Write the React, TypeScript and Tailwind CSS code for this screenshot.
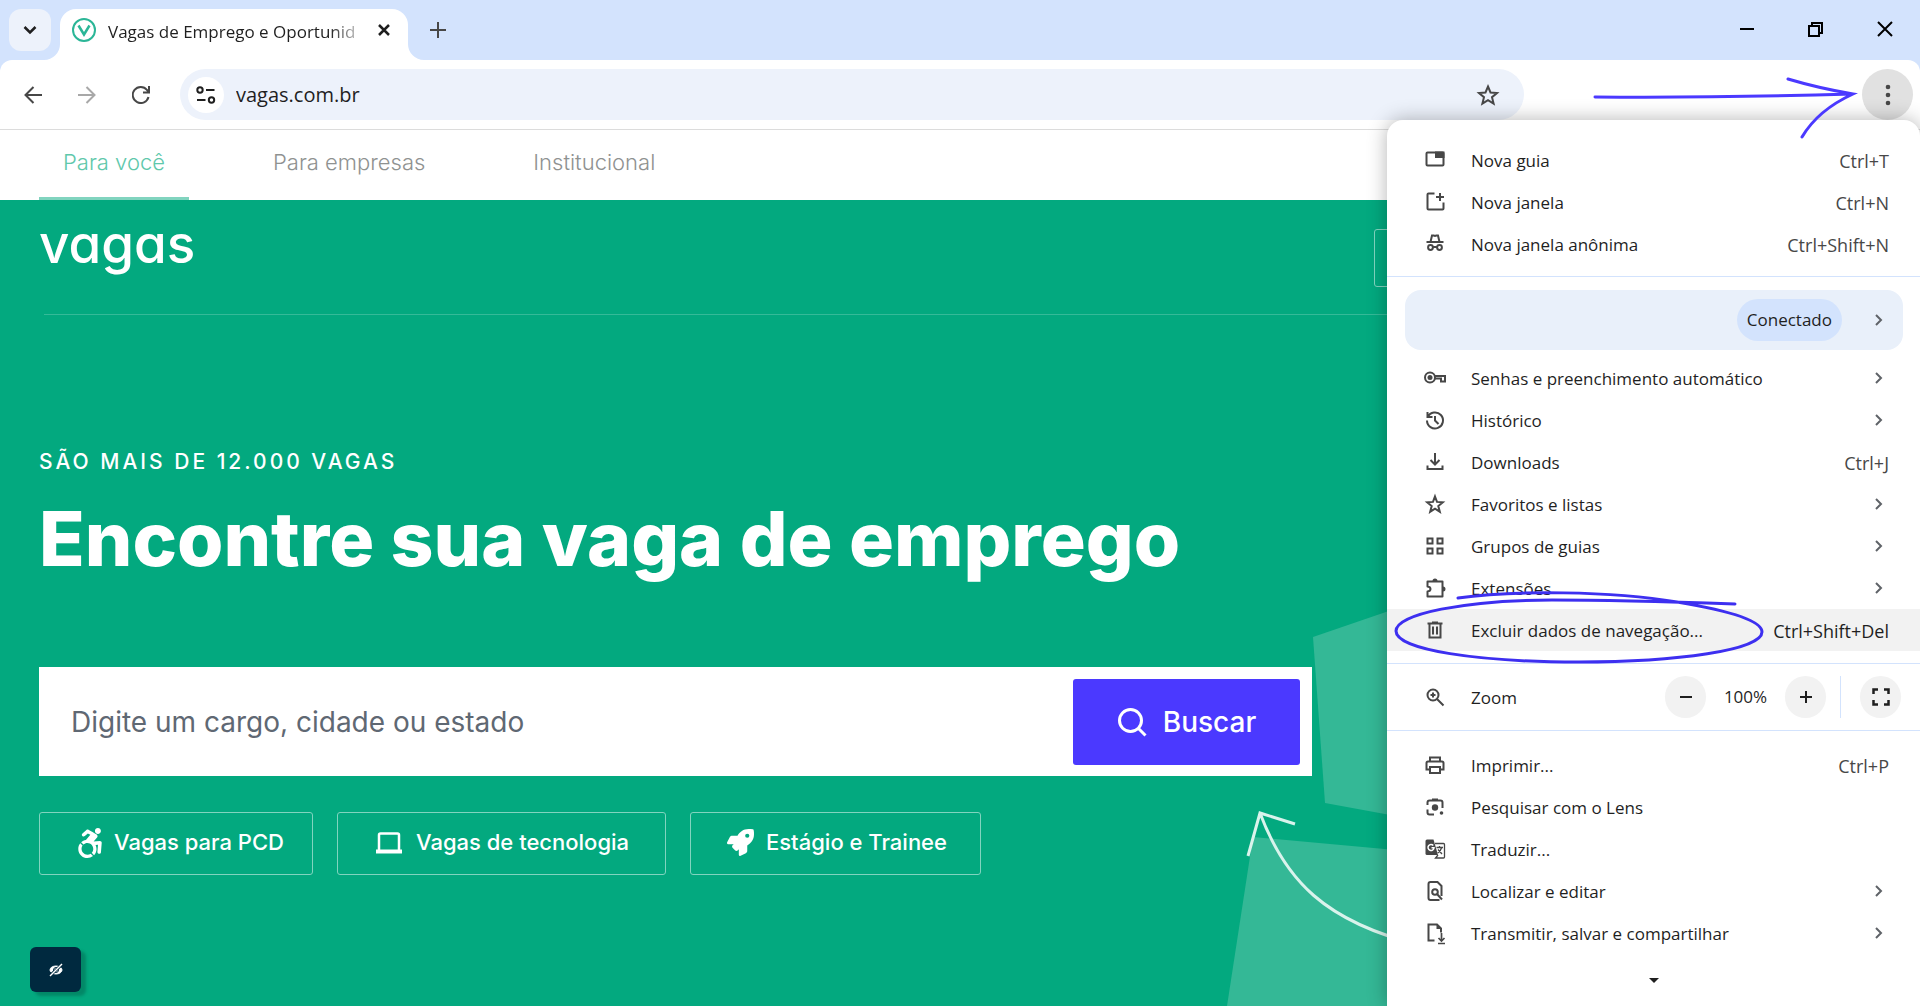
import { FaAccessibleIcon, FaRocket } from "react-icons/fa";
import type { ReactNode } from "react";

const icon = "h-6 w-6 shrink-0 text-[#474747]";

// Iconos del menu, dibujados sobre una cuadricula de 24px
function Stroke({ children }: { children: ReactNode }) {
  return (
    <svg viewBox="0 0 24 24" className={icon} fill="none" stroke="currentColor" strokeWidth="2">
      {children}
    </svg>
  );
}

const icons = {
  tab: (
    <Stroke>
      <rect x="3.500" y="4.500" width="17" height="13" rx="1" />
      <path d="M13 4.500h7.500v4.500h-7.500z" fill="currentColor" />
    </Stroke>
  ),
  window: (
    <Stroke>
      <path d="M11.500 3.500H5.500a1 1 0 0 0-1 1v14a1 1 0 0 0 1 1h14a1 1 0 0 0 1-1v-6M17 3v8M13 7h8" />
    </Stroke>
  ),
  incognito: (
    <Stroke>
      <path d="M3.500 10h17M7.500 10l1.500-6.500h1.700l1.300.5 1.300-.5h1.700L16.500 10" />
      <circle cx="7.500" cy="15.500" r="2.400" />
      <circle cx="16.500" cy="15.500" r="2.400" />
      <path d="M10 15h4" />
    </Stroke>
  ),
  key: (
    <Stroke>
      <circle cx="7" cy="11.500" r="5" />
      <circle cx="7" cy="11.500" r="2.500" fill="currentColor" stroke="none" />
      <path d="M11.500 10H22v5.500h-4v-3h-6" />
    </Stroke>
  ),
  history: (
    <Stroke>
      <path d="M4.500 4v5h5M4.800 9A8 8 0 1 1 4 12.500M12 8v4.500l3.500 3.500" />
    </Stroke>
  ),
  download: (
    <Stroke>
      <path d="M12 3v11M7.500 10l4.500 4.500L16.500 10M4.500 15.500V19h15v-3.500" />
    </Stroke>
  ),
  star: (
    <Stroke>
      <path d="M12 4.500l2 5.400 5.800.4-4.500 3.700 1.500 5.700L12 16.600l-4.800 3.100 1.500-5.700-4.500-3.700 5.800-.4z" />
    </Stroke>
  ),
  grid: (
    <Stroke>
      <path d="M4.500 4.500h5v5h-5zM14.500 4.500h5v5h-5zM4.500 14.500h5v5h-5zM14.500 14.500h5v5h-5z" />
    </Stroke>
  ),
  extension: (
    <Stroke>
      <path d="M4.500 5.500h15v15h-15v-5c4-.5 4-4.500 0-5z" strokeLinejoin="round" />
      <path d="M9.500 5a2.500 2.500 0 0 1 5 0zM20 10.500a2.500 2.500 0 0 1 0 5z" fill="currentColor" stroke="none" />
    </Stroke>
  ),
  trash: (
    <Stroke>
      <path d="M4.500 5.500h15M9 4.500h6M6.500 6v13.500h11V6M10 8.500v8M14 8.500v8" />
    </Stroke>
  ),
  zoom: (
    <Stroke>
      <circle cx="10" cy="10" r="5.500" />
      <path d="M14 14l6.500 6.500M10 7.500v5M7.500 10h5" />
    </Stroke>
  ),
  print: (
    <Stroke>
      <path d="M7 8.500V4.500h10v4M7 16.500H3.500v-6.500q0-1.500 1.500-1.500h14q1.500 0 1.500 1.500v6.500H17M7 14h10v6H7z" />
    </Stroke>
  ),
  lens: (
    <Stroke>
      <path d="M4.500 10V7.500q0-2 2-2h11q2 0 2 2V10M4.500 14.500v3q0 2 2 2H11M9 4.500h6M19.500 10v3" />
      <circle cx="12" cy="12.500" r="3.200" fill="currentColor" stroke="none" />
      <circle cx="18.500" cy="18" r="1.800" fill="currentColor" stroke="none" />
    </Stroke>
  ),
  translate: (
    <Stroke>
      <path d="M4 2.500h6.500l4.500 15.500H4q-1.500 0-1.500-1.500V4q0-1.500 1.500-1.500z" fill="currentColor" stroke="none" />
      <path d="M10.300 8.500a3 3 0 1 0 .7 2.300H8.500" stroke="white" strokeWidth="1.500" />
      <path d="M12 6.500h8.500q1 0 1 1v12.500q0 1-1 1h-8l2.500-3M13.500 10.500h6.500M16.500 9v1.500M18.700 10.500c-.7 2.500-2.500 4.500-4 5.500M15 12.500l4 4.500" strokeWidth="1.300" />
    </Stroke>
  ),
  find: (
    <Stroke>
      <path d="M18.500 17V7l-4-4h-7q-2 0-2 2v14q0 2 2 2h9" />
      <circle cx="12" cy="13" r="2.800" />
      <path d="M14 15l5 5.500" />
    </Stroke>
  ),
  cast: (
    <Stroke>
      <path d="M11.500 19.500h-6V3.500h8.500l4 4v4" />
      <path d="M13.500 3v5h5z" fill="currentColor" stroke="none" />
      <path d="M18.500 12v8M15.500 17l3 3 3-3M15 22.500h7" strokeWidth="1.700" />
    </Stroke>
  ),
};

type Item = { icon: keyof typeof icons; label: string; keys?: string; submenu?: boolean; active?: boolean };

const topItems: Item[] = [
  { icon: "tab", label: "Nova guia", keys: "Ctrl+T" },
  { icon: "window", label: "Nova janela", keys: "Ctrl+N" },
  { icon: "incognito", label: "Nova janela anônima", keys: "Ctrl+Shift+N" },
];

const middleItems: Item[] = [
  { icon: "key", label: "Senhas e preenchimento automático", submenu: true },
  { icon: "history", label: "Histórico", submenu: true },
  { icon: "download", label: "Downloads", keys: "Ctrl+J" },
  { icon: "star", label: "Favoritos e listas", submenu: true },
  { icon: "grid", label: "Grupos de guias", submenu: true },
  { icon: "extension", label: "Extensões", submenu: true },
  { icon: "trash", label: "Excluir dados de navegação...", keys: "Ctrl+Shift+Del", active: true },
];

const bottomItems: Item[] = [
  { icon: "print", label: "Imprimir...", keys: "Ctrl+P" },
  { icon: "lens", label: "Pesquisar com o Lens" },
  { icon: "translate", label: "Traduzir..." },
  { icon: "find", label: "Localizar e editar", submenu: true },
  { icon: "cast", label: "Transmitir, salvar e compartilhar", submenu: true },
];

function Chevron() {
  return (
    <svg viewBox="0 0 10 14" className="mr-[5px] h-3.5 w-2.5" fill="none" stroke="#5f6368" strokeWidth="2">
      <path d="M2 2l5 5-5 5" />
    </svg>
  );
}

function MenuItem({ item }: { item: Item }) {
  return (
    <button
      className={`flex h-[42px] w-full items-center gap-6 pr-[31px] pl-9 text-left text-[17px] ${
        item.active ? "bg-[#f2f2f2]" : ""
      }`}
    >
      {icons[item.icon]}
      <span className="flex-1 pt-0.5 whitespace-nowrap text-[#1f1f1f]">{item.label}</span>
      {item.keys && (
        <span className={`pt-0.5 text-lg ${item.active ? "text-[#1f1f1f]" : "text-[#474747]"}`}>{item.keys}</span>
      )}
      {item.submenu && <Chevron />}
    </button>
  );
}

const roundButton = "flex h-[42px] w-[41px] items-center justify-center rounded-full bg-[#f2f2f2]";

function BrowserMenu() {
  return (
    <div className="absolute top-[120px] right-0 bottom-0 w-[533px] rounded-t-2xl bg-white pt-[19px] shadow-[0_0_20px_rgba(0,0,0,0.3)]">
      {topItems.map((i) => (
        <MenuItem key={i.label} item={i} />
      ))}
      <hr className="mt-[11px] border-[#d3e3fd]" />

      {/* Perfil */}
      <button className="mt-[13px] mb-[7px] ml-[18px] flex h-[60px] w-[498px] items-center justify-end gap-8 rounded-2xl bg-[#e9f0fa] pr-3.5 text-[17px] text-[#1f1f1f]">
        <span className="flex h-[42px] items-center rounded-full bg-[#d3e3fd] px-2.5">Conectado</span>
        <Chevron />
      </button>

      {middleItems.map((i) => (
        <MenuItem key={i.label} item={i} />
      ))}
      <hr className="mt-3 border-[#d3e3fd]" />

      {/* Zoom */}
      <div className="my-3 flex h-[42px] items-center pr-[19px] pl-9 text-[17px] text-[#1f1f1f]">
        {icons.zoom}
        <span className="ml-6 flex-1 pt-0.5">Zoom</span>
        <button aria-label="Diminuir zoom" className={roundButton}>
          <svg viewBox="0 0 14 14" className="h-3.5 w-3.5" stroke="currentColor" strokeWidth="2">
            <path d="M1 7h12" />
          </svg>
        </button>
        <span className="w-[79px] text-center">100%</span>
        <button aria-label="Aumentar zoom" className={roundButton}>
          <svg viewBox="0 0 14 14" className="h-3.5 w-3.5" stroke="currentColor" strokeWidth="2">
            <path d="M1 7h12M7 1v12" />
          </svg>
        </button>
        <span className="mr-[19px] ml-3.5 h-[42px] w-px bg-[#d3e3fd]"></span>
        <button aria-label="Tela cheia" className={roundButton}>
          <svg viewBox="0 0 18 18" className="h-[18px] w-[18px]" fill="none" stroke="currentColor" strokeWidth="2.500">
            <path d="M1.500 6V1.500H6M12 1.500h4.500V6M16.500 12v4.500H12M6 16.500H1.500V12" />
          </svg>
        </button>
      </div>
      <hr className="mb-[13px] border-[#d3e3fd]" />

      {bottomItems.map((i) => (
        <MenuItem key={i.label} item={i} />
      ))}
      <svg viewBox="0 0 10 6" className="mx-auto mt-6 h-1.5 w-2.5" fill="#1f1f1f">
        <path d="M0 0h10L5 5z" />
      </svg>

      {/* Circulo de destaque */}
      <svg
        viewBox="0 0 380 84"
        className="pointer-events-none absolute top-[466px] left-0 h-[84px] w-[380px]"
        fill="none"
        stroke="#3d2ff0"
        strokeWidth="3"
        strokeLinecap="round"
      >
        <path d="M71 12C125 4 225 5 290 16C350 26 375 36 375 46C375 64 290 76 192 76C92 76 9 64 9 45C9 28 78 14 165 14C230 14 290 16 348 18" />
      </svg>
    </div>
  );
}

function TabStrip() {
  return (
    <div className="flex h-[60px] items-start bg-[#d3e3fd] pt-[9px] pl-[9px]">
      <button aria-label="Pesquisar guias" className="flex h-[42px] w-[42px] items-center justify-center rounded-xl bg-[#edf2fb]">
        <svg viewBox="0 0 14 10" className="h-2.5 w-3.5" fill="none" stroke="#1f1f1f" strokeWidth="2.500">
          <path d="M1.500 2L7 7.500 12.500 2" />
        </svg>
      </button>
      <div className="relative ml-[9px] flex h-[51px] w-[348px] items-start rounded-t-2xl bg-white pt-[9px] pl-3">
        <svg viewBox="0 0 16 16" className="absolute bottom-0 -left-4 h-4 w-4" fill="white">
          <path d="M16 0v16H0A16 16 0 0 0 16 0z" />
        </svg>
        <svg viewBox="0 0 16 16" className="absolute -right-4 bottom-0 h-4 w-4" fill="white">
          <path d="M0 0v16h16A16 16 0 0 1 0 0z" />
        </svg>
        <svg viewBox="0 0 24 24" className="h-6 w-6 shrink-0" fill="none" stroke="#2bb697">
          <circle cx="12" cy="12" r="11" strokeWidth="2" />
          <path d="M6.500 7.500L12 16.500l5.500-9" strokeWidth="2.500" />
        </svg>
        <span className="ml-3 w-[252px] bg-linear-to-r from-[#1f1f1f] from-88% to-[#1f1f1f]/20 bg-clip-text text-[17px] leading-7 whitespace-nowrap text-transparent">
          Vagas de Emprego e Oportunid
        </span>
        <button aria-label="Fechar guia" className="ml-4 flex h-6 w-4 items-center justify-center">
          <svg viewBox="0 0 12 12" className="h-3 w-3" stroke="#1f1f1f" strokeWidth="2.500">
            <path d="M1 1l10 10M11 1L1 11" />
          </svg>
        </button>
      </div>
      <button aria-label="Nova guia" className="mt-[13px] ml-[22px]">
        <svg viewBox="0 0 16 16" className="h-4 w-4" stroke="#474747" strokeWidth="2">
          <path d="M8 0v16M0 8h16" />
        </svg>
      </button>
      <div className="mt-3 mr-[27px] ml-auto flex gap-[53px]">
        <button aria-label="Minimizar">
          <svg viewBox="0 0 16 16" className="h-4 w-4" stroke="black" strokeWidth="2">
            <path d="M1 8h14" />
          </svg>
        </button>
        <button aria-label="Restaurar">
          <svg viewBox="0 0 16 16" className="h-4 w-4" fill="none" stroke="black" strokeWidth="2">
            <path d="M1 5h10v10H1zM4 4V2h10v10h-3" />
          </svg>
        </button>
        <button aria-label="Fechar">
          <svg viewBox="0 0 16 16" className="h-4 w-4" stroke="black" strokeWidth="2">
            <path d="M1 1l14 14M15 1L1 15" />
          </svg>
        </button>
      </div>
    </div>
  );
}

function Toolbar() {
  return (
    <div className="bg-[#d3e3fd]">
      <div className="flex h-[70px] items-center rounded-t-xl border-b border-[#dcdcdc] bg-white pr-[7px] pl-6">
        <button aria-label="Voltar">
          <svg viewBox="0 0 18 18" className="h-[18px] w-[18px]" fill="none" stroke="#474747" strokeWidth="2">
            <path d="M18 9H2M9.500 1L1.500 9l8 8" />
          </svg>
        </button>
        <button aria-label="Avançar" className="ml-9">
          <svg viewBox="0 0 18 18" className="h-[18px] w-[18px]" fill="none" stroke="#a8a8a8" strokeWidth="2">
            <path d="M0 9h16M8.500 1l8 8-8 8" />
          </svg>
        </button>
        <button aria-label="Recarregar" className="ml-9">
          <svg viewBox="0 0 18 18" className="h-[18px] w-[18px]" fill="none" stroke="#474747" strokeWidth="2">
            <path d="M16.500 11A8 8 0 1 1 15 4l2 2M17 0v6.500h-6" />
          </svg>
        </button>
        <div className="ml-[30px] flex h-[51px] w-[1344px] min-w-0 shrink items-center rounded-full bg-[#edf2fb] pr-6 pl-2">
          <button aria-label="Informações do site" className="flex h-9 w-9 shrink-0 items-center justify-center rounded-full bg-white">
            <svg viewBox="0 0 20 18" className="h-[18px] w-5" fill="none" stroke="#1f1f1f" strokeWidth="2">
              <circle cx="4" cy="4" r="2.700" />
              <circle cx="15.500" cy="14" r="2.700" />
              <path d="M10 4h8.500M1 14h8.500" />
            </svg>
          </button>
          <input
            aria-label="Endereço"
            defaultValue="vagas.com.br"
            className="ml-3 min-w-0 flex-1 bg-transparent text-xl text-[#1f1f1f] outline-none"
          />
          <button aria-label="Adicionar aos favoritos">
            <svg viewBox="0 0 24 24" className="h-6 w-6" fill="none" stroke="#474747" strokeWidth="2">
              <path d="M12 3.500l2.500 6 6.500.5-5 4.200 1.600 6.400L12 17.100l-5.600 3.500L8 14.200 3 10l6.500-.5z" />
            </svg>
          </button>
        </div>
        <button aria-label="Menu" className="ml-auto flex h-[51px] w-[51px] shrink-0 items-center justify-center rounded-full bg-[#e1e1e1]">
          <svg viewBox="0 0 6 24" className="h-6 w-1.5" fill="#474747">
            <circle cx="3" cy="4" r="2.300" />
            <circle cx="3" cy="12" r="2.300" />
            <circle cx="3" cy="20" r="2.300" />
          </svg>
        </button>
      </div>
    </div>
  );
}

function SiteNav() {
  return (
    <nav className="flex h-[70px] bg-white pl-[39px] text-[22px] leading-[64px] font-light text-[#8f9291]">
      <a href="#voce" className="border-b-3 border-[#81d4bf] px-6 text-[#60c8ab]">
        Para você
      </a>
      <a href="#empresas" className="ml-[60px] px-6">
        Para empresas
      </a>
      <a href="#institucional" className="ml-[60px] px-6">
        Institucional
      </a>
    </nav>
  );
}

const quickLink =
  "flex h-[63px] items-center rounded-[3px] border border-[#81d4bf] pb-0.5 text-[22px] font-medium whitespace-nowrap";

function Hero() {
  return (
    <main className="relative flex-1 overflow-hidden bg-[#03a97f] px-[39px] text-white">
      {/* Formas de fondo */}
      <svg viewBox="0 0 700 806" className="absolute top-0 right-0 h-[806px] w-[700px]" fill="none">
        <path d="M93 437L230 390v236L105 603z" fill="#34b896" />
        <path d="M33 637L230 655v151H7z" fill="#34b896" />
        <path d="M28 656L40 613l35 11M40 613C65 680 105 722 200 745" stroke="#d9f3ec" strokeWidth="3" />
      </svg>

      <header className="relative flex h-[114px] items-start justify-between">
        <a href="#inicio" className="mt-1.5 text-[53px] leading-[76px] font-medium [font-feature-settings:'cv11']">
          vagas
        </a>
        <button aria-label="Entrar" className="mt-[29px] h-[58px] w-[507px] rounded-[3px] border border-[#81d4bf]"></button>
      </header>
      <hr className="relative ml-[5px] border-[#35ba98]" />

      <section className="relative pt-[131px]">
        <p className="text-[21px] leading-8 font-medium tracking-[3px]">SÃO MAIS DE 12.000 VAGAS</p>
        <h1 className="mt-5 text-[75px] leading-[82px] font-extrabold whitespace-nowrap">Encontre sua vaga de emprego</h1>

        <form className="mt-[87px] flex h-[109px] max-w-[1273px] items-center bg-white pr-3 pl-8">
          <input
            aria-label="Cargo, cidade ou estado"
            placeholder="Digite um cargo, cidade ou estado"
            className="min-w-0 flex-1 text-[28px] text-black outline-none placeholder:text-[#5f6873]"
          />
          <button type="button" className="flex h-[86px] w-[227px] items-center justify-center gap-4 rounded-[3px] bg-[#4b39ff] text-[28px] font-medium">
            <svg viewBox="0 0 30 30" className="h-[30px] w-[30px]" fill="none" stroke="white" strokeWidth="3">
              <circle cx="13.500" cy="13.500" r="11" />
              <path d="M21 21l7.500 7.500" />
            </svg>
            Buscar
          </button>
        </form>

        <div className="mt-9 flex gap-6">
          <a href="#pcd" className={`${quickLink} w-[274px] pl-9`}>
            <FaAccessibleIcon className="mr-2.5 h-[30px] w-[28px]" />
            Vagas para PCD
          </a>
          <a href="#tecnologia" className={`${quickLink} w-[329px] pl-[38px]`}>
            <svg viewBox="0 0 26 22" className="mr-3.5 h-[22px] w-[26px]" fill="none" stroke="white" strokeWidth="2.500">
              <path d="M3 18V3q0-1.500 1.500-1.500h17q1.500 0 1.500 1.500v15" />
              <path d="M0 19.500h26" strokeWidth="4" />
            </svg>
            Vagas de tecnologia
          </a>
          <a href="#estagio" className={`${quickLink} w-[291px] pl-9`}>
            <FaRocket className="mr-3 h-[27px] w-[27px]" />
            Estágio e Trainee
          </a>
        </div>
      </section>

      <button aria-label="Acessibilidade" className="absolute bottom-3.5 left-[30px] flex h-[45px] w-[51px] items-center justify-center rounded-md bg-[#00293f] shadow-[5px_4px_3px_rgba(0,60,50,0.3)]">
        <svg viewBox="0 0 16 14" className="h-3.5 w-4" fill="none" stroke="white">
          <ellipse cx="8" cy="7" rx="6" ry="4" fill="white" />
          <circle cx="8" cy="7" r="2.500" stroke="#00293f" />
          <path d="M1.500 13L14.500 1" stroke="#00293f" strokeWidth="3" />
          <path d="M2 13L14 1" strokeWidth="1.500" />
        </svg>
      </button>
    </main>
  );
}

export default function App() {
  return (
    <div className="relative flex min-h-screen flex-col overflow-hidden font-['Inter',sans-serif]">
      <div className="font-['Open_Sans','Noto_Sans',sans-serif]">
        <TabStrip />
        <Toolbar />
      </div>
      <SiteNav />
      <Hero />
      <div className="font-['Open_Sans','Noto_Sans',sans-serif]">
        <BrowserMenu />
      </div>
      {/* Flecha que apunta al boton del menu */}
      <svg
        viewBox="0 0 270 70"
        className="pointer-events-none absolute top-[72px] right-[62px] h-[70px] w-[270px]"
        fill="none"
        stroke="#4b39ff"
        strokeWidth="3"
        strokeLinecap="round"
      >
        <path d="M7 25Q130 26 265 22M200 7Q230 16 265 22Q230 38 214 65" />
      </svg>
    </div>
  );
}
